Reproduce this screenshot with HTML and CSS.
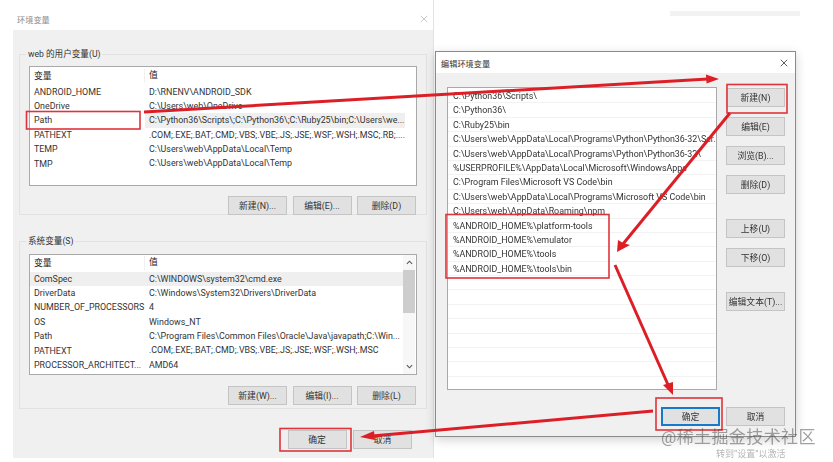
FILE: index.html
```html
<!DOCTYPE html>
<html lang="zh">
<head>
<meta charset="utf-8">
<title>环境变量</title>
<link rel="stylesheet" href="styles.css">
</head>
<body>
<div class="desktop">
  <div class="topstrip"></div>

  <section class="window win-env">
    <header class="titlebar faded"><span>环境变量</span>
      <svg class="close" viewBox="0 0 10 10"><path d="M1 1l8 8M9 1l-8 8" stroke="#bbb" stroke-width="1" fill="none"/></svg>
    </header>
    <div class="winbody">
      <fieldset class="group group-user">
        <legend>web 的用户变量(U)</legend>
        <div class="listbox">
          <div class="row head"><span class="c1">变量</span><span class="c2">值</span></div>
          <div class="row"><span class="c1">ANDROID_HOME</span><span class="c2">D:\RNENV\ANDROID_SDK</span></div>
          <div class="row"><span class="c1">OneDrive</span><span class="c2">C:\Users\web\OneDrive</span></div>
          <div class="row sel"><span class="c1">Path</span><span class="c2">C:\Python36\Scripts\;C:\Python36\;C:\Ruby25\bin;C:\Users\we...</span></div>
          <div class="row"><span class="c1">PATHEXT</span><span class="c2">.COM;.EXE;.BAT;.CMD;.VBS;.VBE;.JS;.JSE;.WSF;.WSH;.MSC;.RB;....</span></div>
          <div class="row"><span class="c1">TEMP</span><span class="c2">C:\Users\web\AppData\Local\Temp</span></div>
          <div class="row"><span class="c1">TMP</span><span class="c2">C:\Users\web\AppData\Local\Temp</span></div>
        </div>
        <div class="btnrow">
          <button class="btn">新建(N)...</button>
          <button class="btn">编辑(E)...</button>
          <button class="btn">删除(D)</button>
        </div>
      </fieldset>
      <fieldset class="group group-sys">
        <legend>系统变量(S)</legend>
        <div class="listbox scrolled">
          <div class="rows">
            <div class="row head"><span class="c1">变量</span><span class="c2">值</span></div>
            <div class="row sel-full"><span class="c1">ComSpec</span><span class="c2">C:\WINDOWS\system32\cmd.exe</span></div>
            <div class="row"><span class="c1">DriverData</span><span class="c2">C:\Windows\System32\Drivers\DriverData</span></div>
            <div class="row"><span class="c1">NUMBER_OF_PROCESSORS</span><span class="c2">4</span></div>
            <div class="row"><span class="c1">OS</span><span class="c2">Windows_NT</span></div>
            <div class="row"><span class="c1">Path</span><span class="c2">C:\Program Files\Common Files\Oracle\Java\javapath;C:\Win...</span></div>
            <div class="row"><span class="c1">PATHEXT</span><span class="c2">.COM;.EXE;.BAT;.CMD;.VBS;.VBE;.JS;.JSE;.WSF;.WSH;.MSC</span></div>
            <div class="row"><span class="c1">PROCESSOR_ARCHITECT...</span><span class="c2">AMD64</span></div>
          </div>
          <div class="scrollbar">
            <svg class="arrow" viewBox="0 0 8 5"><path d="M1 4 4 1l3 3" fill="none" stroke="#555" stroke-width="1.2"/></svg>
            <div class="thumbtrack"><div class="thumb"></div></div>
            <svg class="arrow" viewBox="0 0 8 5"><path d="M1 1l3 3 3-3" fill="none" stroke="#555" stroke-width="1.2"/></svg>
          </div>
        </div>
        <div class="btnrow">
          <button class="btn">新建(W)...</button>
          <button class="btn">编辑(I)...</button>
          <button class="btn">删除(L)</button>
        </div>
      </fieldset>
      <div class="btnrow footer">
        <button class="btn">确定</button>
        <button class="btn">取消</button>
      </div>
    </div>
  </section>

  <section class="window win-edit">
    <header class="titlebar"><span>编辑环境变量</span>
      <svg class="close" viewBox="0 0 10 10"><path d="M1 1l8 8M9 1l-8 8" stroke="#333" stroke-width="1" fill="none"/></svg>
    </header>
    <div class="editbody">
      <div class="editmain">
        <div class="pathlist">
          <div class="pathrow">C:\Python36\Scripts\</div>
          <div class="pathrow">C:\Python36\</div>
          <div class="pathrow">C:\Ruby25\bin</div>
          <div class="pathrow">C:\Users\web\AppData\Local\Programs\Python\Python36-32\Scr...</div>
          <div class="pathrow">C:\Users\web\AppData\Local\Programs\Python\Python36-32\</div>
          <div class="pathrow">%USERPROFILE%\AppData\Local\Microsoft\WindowsApps</div>
          <div class="pathrow">C:\Program Files\Microsoft VS Code\bin</div>
          <div class="pathrow">C:\Users\web\AppData\Local\Programs\Microsoft VS Code\bin</div>
          <div class="pathrow">C:\Users\web\AppData\Roaming\npm</div>
          <div class="pathrow">%ANDROID_HOME%\platform-tools</div>
          <div class="pathrow">%ANDROID_HOME%\emulator</div>
          <div class="pathrow">%ANDROID_HOME%\tools</div>
          <div class="pathrow">%ANDROID_HOME%\tools\bin</div>
          <div class="pathrow"></div><div class="pathrow"></div><div class="pathrow"></div>
          <div class="pathrow"></div><div class="pathrow"></div><div class="pathrow"></div>
          <div class="pathrow"></div><div class="pathrow"></div>
        </div>
        <div class="sidebtns">
          <button class="btn">新建(N)</button>
          <button class="btn">编辑(E)</button>
          <button class="btn">浏览(B)...</button>
          <button class="btn">删除(D)</button>
          <button class="btn gap-move">上移(U)</button>
          <button class="btn">下移(O)</button>
          <button class="btn gap-text">编辑文本(T)...</button>
        </div>
      </div>
      <div class="btnrow editfoot">
        <button class="btn primary">确定</button>
        <button class="btn">取消</button>
      </div>
    </div>
  </section>

  <svg class="annot" viewBox="0 0 833 462">
    <g fill="none" stroke="#e0343c" stroke-width="1.6">
      <rect x="26.5" y="111.5" width="113.5" height="17.5"/>
      <rect x="727" y="84.5" width="60" height="28.5"/>
      <rect x="446" y="214.5" width="163" height="63.500"/>
      <rect x="656" y="398" width="66" height="32"/>
      <rect x="280" y="428.5" width="71" height="22.5"/>
    </g>
    <g fill="none" stroke="#dc1f26" stroke-width="3">
      <path d="M144 112 708 79"/>
      <path d="M730 113 623 244"/>
      <path d="M615 265 669 387"/>
      <path d="M653 411 372 436"/>
    </g>
    <g fill="#dc1f26">
      <path d="M719 79 706 74.500l.5 9z"/>
      <path d="M617 252l1-12 5 3 7 2z"/>
      <path d="M673 395l-10-10 5-1.500 5-1.500z"/>
      <path d="M360 437l14-6 1 9z"/>
    </g>
  </svg>

  <div class="wm1">@稀土掘金技术社区</div>
  <div class="wm2">转到“设置”以激活</div>
</div>
</body>
</html>
```
FILE: styles.css
```css
* { box-sizing: border-box; }
html, body { margin: 0; padding: 0; background: #fff; }
.desktop {
  position: relative;
  width: 833px;
  height: 462px;
  overflow: hidden;
  font-family: Roboto, "Noto Sans CJK SC", sans-serif;
  font-size: 8.9px;
  color: #333;
  filter: blur(.35px);
}
.topstrip {
  position: absolute;
  left: 670px;
  top: 11px;
  width: 130px;
  height: 5px;
  background: #f2f2f2;
}
.window {
  position: absolute;
  display: flex;
  flex-direction: column;
  background: #f0f0f0;
}
.win-env {
  left: 13px;
  top: 0;
  width: 421px;
  height: 458px;
  border-right: 1px solid #e2e2e2;
}
.win-edit {
  left: 435px;
  top: 51px;
  width: 361px;
  height: 386px;
  border: 1px solid #8a8a8a;
  box-shadow: 0 3px 10px rgba(0, 0, 0, .18);
}
.titlebar {
  display: flex;
  align-items: center;
  justify-content: space-between;
  background: #fff;
  font-size: 8.2px;
  font-weight: 400;
  padding: 0 7px 0 5px;
  height: 21px;
  flex: none;
}
.titlebar.faded {
  height: 30px;
  padding: 8px 5px 0 4px;
  color: #8c8c8c;
}
.close { width: 8px; height: 8px; }
.winbody { flex: 1; display: flex; flex-direction: column; padding: 18px 0 0 6px; }
.group {
  margin: 0;
  padding: 0 0 0 9px;
  border: 1px solid #e2e2e2;
  width: 408px;
  min-width: 0;
}
.group legend { padding: 0 2px; margin-left: -3px; font-size: 8.6px; line-height: 12px; }
.group-user { height: 167px; }
.group-user legend { margin-top: -1px; }
.group-sys { height: 174px; margin-top: 20px; }
.group-user .listbox { margin-top: 6px; height: 120px; }
.group-sys .listbox { margin-top: 7px; height: 121px; }
.listbox {
  width: 388px;
  background: #fff;
  border: 1px solid #a9a9a9;
  overflow: hidden;
}
.scrolled { display: flex; }
.rows { flex: 1; min-width: 0; }
.row {
  display: flex;
  align-items: center;
  height: 14.4px;
  line-height: 14px;
  white-space: nowrap;
}
.row.head { height: 17.5px; padding-top: 1px; color: #222; }
.group-sys .row.head { height: 16.5px; padding-top: 0; }
.row.head .c1 { border-right: 1px solid #f0f0f0; }
.row.sel .c2, .row.sel-full { background: #efefef; }
.c1 { flex: none; width: 115px; padding-left: 4px; overflow: hidden; }
.c2 {
  flex: none;
  width: 260px;
  height: 100%;
  padding-left: 4px;
  line-height: 14px;
  overflow: hidden;
}
.scrollbar {
  flex: none;
  width: 12px;
  margin-right: 1px;
  display: flex;
  flex-direction: column;
  align-items: center;
  background: #f7f7f7;
}
.arrow { flex: none; width: 7px; height: 5px; margin: 5px 0; }
.thumbtrack { flex: 1; width: 100%; }
.thumb { width: 100%; height: 43px; background: #cdcdcd; }
.btnrow { display: flex; justify-content: flex-end; gap: 5.5px; }
.group-user .btnrow { margin-top: 10px; padding-right: 10px; }
.group-sys .btnrow { margin-top: 11px; padding-right: 10px; }
.footer { width: 393px; margin-top: 21px; gap: 6.5px; }
.btn {
  flex: none;
  width: 59px;
  height: 19px;
  padding: 0;
  font: inherit;
  font-size: 8.8px;
  color: #333;
  background: #e1e1e1;
  border: 1px solid #c4c4c4;
  border-radius: 0;
}
.editbody { flex: 1; display: flex; flex-direction: column; padding: 14px 10px 0 11px; }
.editmain { display: flex; justify-content: space-between; }
.pathlist {
  width: 270px;
  height: 303px;
  padding-top: 1px;
  background: #fff;
  border: 1px solid #a9a9a9;
  overflow: hidden;
}
.pathrow {
  height: 14.4px;
  line-height: 14px;
  padding-left: 5px;
  white-space: nowrap;
  overflow: hidden;
  border-bottom: 1px solid #f2f2f2;
}
.sidebtns { display: flex; flex-direction: column; gap: 10px; padding-top: 1px; }
.sidebtns .gap-move { margin-top: 15px; }
.sidebtns .gap-text { margin-top: 15px; }
.editfoot { margin-top: 17px; gap: 6px; }
.btn.primary { border: 1px solid #1a78c8; box-shadow: inset 0 0 0 1px #1a78c8; }
.annot { position: absolute; left: 0; top: 0; width: 833px; height: 462px; }
.wm1 {
  position: absolute;
  left: 661px;
  top: 427px;
  font-size: 17px;
  line-height: 20px;
  letter-spacing: .4px;
  color: rgba(70, 70, 70, .5);
  white-space: nowrap;
}
.wm2 {
  position: absolute;
  left: 716px;
  top: 449px;
  font-size: 9px;
  line-height: 11px;
  color: #b5b5b5;
  white-space: nowrap;
}
```
